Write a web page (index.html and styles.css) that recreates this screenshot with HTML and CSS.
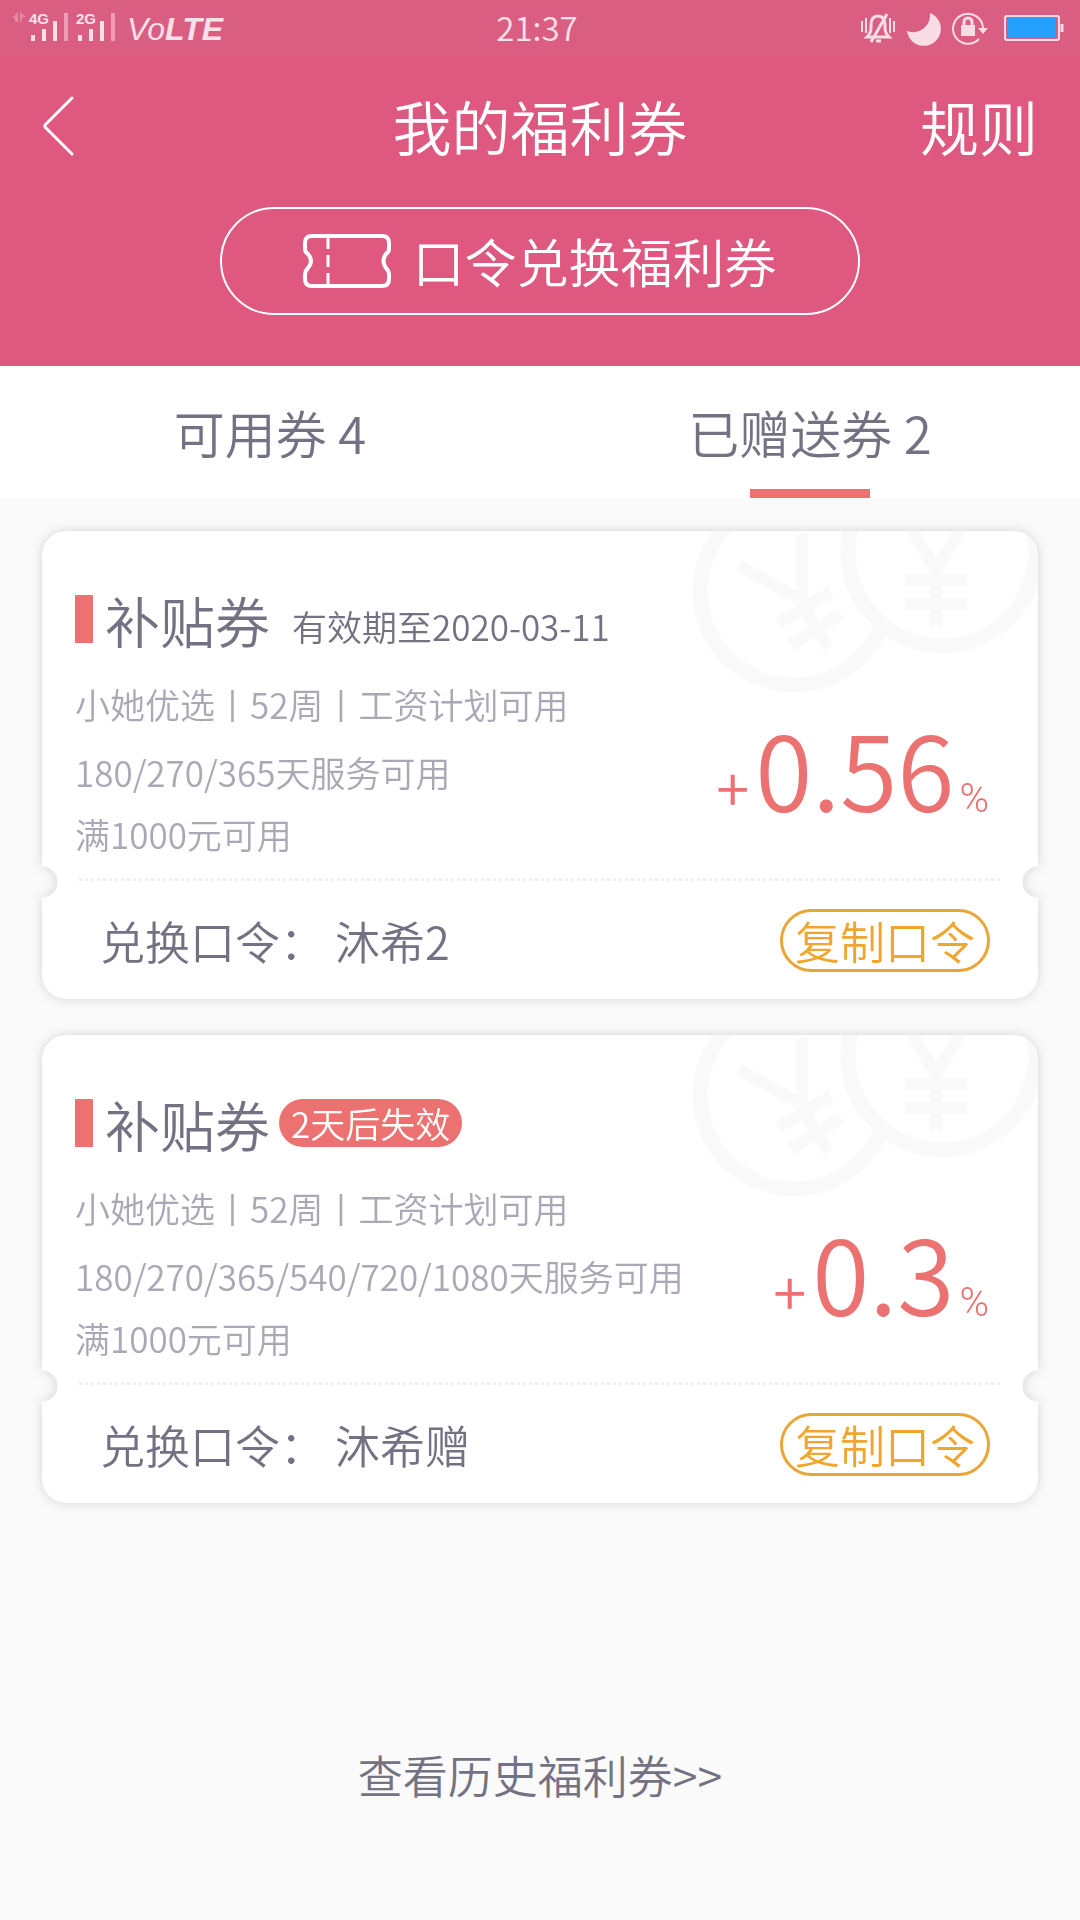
FILE: index.html
```html
<!DOCTYPE html>
<html lang="zh-CN">
<head>
<meta charset="UTF-8">
<meta name="viewport" content="width=device-width, initial-scale=1">
<title>我的福利券</title>
<link rel="stylesheet" href="styles.css">
</head>
<body>
<div class="status">
  <div class="status-left">
    <svg class="signal" width="108" height="34" viewBox="10 10 108 34" aria-hidden="true">
      <g fill="#e58aa6">
        <path d="M12 18l6-6v10h-3v-4zM20 12l6 5h-3l-3 6z"/>
      </g>
      <g fill="#ee9db6">
        <rect x="64" y="13" width="4" height="28"/><rect x="111" y="13" width="4" height="28"/>
      </g>
      <g fill="#fae0e8">
        <rect x="31" y="35" width="4" height="6"/><rect x="42" y="29" width="4" height="12"/><rect x="53" y="21" width="4" height="20"/>
        <rect x="78" y="35" width="4" height="6"/><rect x="89" y="29" width="4" height="12"/><rect x="100" y="21" width="4" height="20"/>
        <text class="net" x="29" y="24">4G</text><text class="net" x="76" y="24">2G</text>
      </g>
    </svg>
    <span class="volte">Vo<b>LTE</b></span>
  </div>
  <time class="clock">21:37</time>
  <svg class="status-icons" width="206" height="40" viewBox="858 6 206 40" fill="none" stroke="#f8dde6" aria-hidden="true">
    <path stroke-width="2" d="M862 20v11M866 17v15M890 17v15M894 20v11"/>
    <path stroke-width="3" d="M867 36q4-4 4-9v-3q0-9 7-9t7 9v3q0 5 4 9zM871 41l16-28M876 40h5"/>
    <path fill="#f8dde6" stroke="none" d="M930 12a17 17 0 1 1-23 18a17 17 0 0 0 23-18z"/>
    <path stroke-width="2" d="M979 38a15 15 0 1 1 4-11"/>
    <path fill="#f8dde6" stroke="none" d="M978 27h10l-5 6zM961 24h14v11h-14z"/>
    <path stroke-width="3" d="M964 25v-4a4 4 0 0 1 8 0v4"/>
    <rect x="1005" y="15" width="54" height="24" rx="2" stroke-width="2"/>
    <rect x="1007" y="17" width="49" height="20" fill="#26a0ff" stroke="none"/>
    <path stroke-width="3" d="M1062 23v8"/>
  </svg>
</div>
<header class="hero">
  <nav class="navbar">
    <button class="back" type="button" aria-label="返回">
      <svg width="34" height="62" viewBox="1 0 34 62" fill="none" stroke="#fff" stroke-width="3" stroke-linecap="round" stroke-linejoin="round"><path d="M31 3L4 30a2 2 0 0 0 0 2L31 59"/></svg>
    </button>
    <h1 class="title">我的福利券</h1>
    <a class="rules" href="#rules">规则</a>
  </nav>
  <button class="redeem" type="button">
    <svg width="88" height="54" viewBox="0 0 88 54" fill="none" stroke="#fff" stroke-width="4" aria-hidden="true">
      <path d="M9 2h70q7 0 7 7v6q0 3-3 5q-5 7 0 14q3 3 3 6v5q0 7-7 7H9q-7 0-7-7v-5q0-3 3-6q6-7 0-14q-3-2-3-5V9q0-7 7-7z"/>
      <path stroke-width="3" d="M25 4v11M25 21v12M25 39v11"/>
    </svg>
    <span>口令兑换福利券</span>
  </button>
</header>
<nav class="tabs">
  <a class="tab" href="#available">可用券 4</a>
  <a class="tab active" href="#given" aria-current="page">已赠送券 2</a>
</nav>
<main class="content">
  <article class="coupon">
    <div class="card">
      <svg class="coins" width="360" height="180" viewBox="640 0 360 180" fill="none" stroke="#f9f9f9" aria-hidden="true">
        <circle cx="752" cy="60" r="94" stroke-width="15"/>
        <path stroke-width="12" d="M697 35l63 34V3M757 66l29 51M736 92l53-31M748 114l51-31"/>
        <circle cx="900" cy="21" r="94" stroke-width="15" fill="#fff"/>
        <path stroke-width="12" d="M868-6l26 46l26-46M894 38v58M863 49h62M863 73h62"/>
      </svg>
      <div class="card-head">
        <h2 class="name">补贴券</h2>
        <span class="expiry">有效期至2020-03-11</span>
      </div>
      <div class="card-body">
        <ul class="terms"><li>小她优选丨52周丨工资计划可用</li><li>180/270/365天服务可用</li><li>满1000元可用</li></ul>
        <p class="rate"><span class="plus">+</span>0.56<span class="percent">%</span></p>
      </div>
      <div class="card-foot">
        <span>兑换口令： 沐希2</span>
        <button class="copy" type="button">复制口令</button>
      </div>
    </div>
  </article>
  <article class="coupon">
    <div class="card">
      <svg class="coins" width="360" height="180" viewBox="640 0 360 180" fill="none" stroke="#f9f9f9" aria-hidden="true">
        <circle cx="752" cy="60" r="94" stroke-width="15"/>
        <path stroke-width="12" d="M697 35l63 34V3M757 66l29 51M736 92l53-31M748 114l51-31"/>
        <circle cx="900" cy="21" r="94" stroke-width="15" fill="#fff"/>
        <path stroke-width="12" d="M868-6l26 46l26-46M894 38v58M863 49h62M863 73h62"/>
      </svg>
      <div class="card-head">
        <h2 class="name">补贴券</h2>
        <span class="badge">2天后失效</span>
      </div>
      <div class="card-body">
        <ul class="terms"><li>小她优选丨52周丨工资计划可用</li><li>180/270/365/540/720/1080天服务可用</li><li>满1000元可用</li></ul>
        <p class="rate"><span class="plus">+</span>0.3<span class="percent">%</span></p>
      </div>
      <div class="card-foot">
        <span>兑换口令： 沐希赠</span>
        <button class="copy" type="button">复制口令</button>
      </div>
    </div>
  </article>
  <a class="history" href="#history">查看历史福利券&gt;&gt;</a>
</main>
</body>
</html>
```
FILE: styles.css
```css
* { box-sizing: border-box; margin: 0; padding: 0; }
body {
  min-height: 100vh;
  background: #fafafa;
  color: #747282;
  font-family: "Noto Sans CJK SC", sans-serif;
  font-weight: 350;
}
a { color: inherit; text-decoration: none; }
button { background: none; border: 0; color: inherit; font: inherit; cursor: pointer; }
svg { display: block; flex: none; }

.status {
  position: relative;
  z-index: 1;
  display: grid;
  grid-template-columns: 1fr auto 1fr;
  align-items: center;
  height: 54px;
  padding: 0 16px 0 10px;
  background: #da5e82;
  color: #fae0e8;
}
.status-left { display: flex; align-items: center; gap: 9px; }
.net { font: bold 15px "Liberation Sans", sans-serif; }
.volte { font: italic 32px/40px "Liberation Sans", sans-serif; padding-top: 4px; }
.clock { font-size: 33px; line-height: 40px; }
.status-icons { justify-self: end; }

.hero {
  display: flex;
  flex-direction: column;
  align-items: center;
  gap: 9px;
  padding-bottom: 51px;
  background: #df5880;
  color: #fff;
}
.navbar {
  display: grid;
  grid-template-columns: 1fr auto 1fr;
  align-items: center;
  width: 100%;
  height: 144px;
  padding: 0 42px;
}
.back { justify-self: start; }
.title { font-size: 59px; font-weight: inherit; line-height: 72px; }
.rules { justify-self: end; font-size: 59px; line-height: 72px; }
.redeem {
  display: flex;
  align-items: center;
  justify-content: center;
  gap: 21px;
  width: 640px;
  max-width: 92%;
  height: 108px;
  border: 2px solid #fff;
  border-radius: 54px;
  font-size: 52px;
  line-height: 72px;
}

.tabs { display: flex; height: 132px; background: #fff; }
.tab {
  flex: 1;
  display: flex;
  justify-content: center;
  align-items: center;
  position: relative;
  font-size: 51px;
}
.active::after {
  content: "";
  position: absolute;
  bottom: 0;
  width: 120px;
  height: 9px;
  background: #eb7270;
}

.content { display: flex; flex-direction: column; gap: 36px; padding: 33px 42px; }
.coupon { filter: drop-shadow(0 0 6px rgba(0, 0, 0, .15)); }
.card {
  position: relative;
  overflow: hidden;
  border-radius: 24px;
  background: #fff;
  mask:
    radial-gradient(circle at 0 calc(100% - 117px), transparent 15px, #000 16px) intersect,
    radial-gradient(circle at 100% calc(100% - 117px), transparent 15px, #000 16px);
}
.coins { position: absolute; top: 0; right: -4px; }
.card-head {
  position: relative;
  display: flex;
  align-items: center;
  height: 116px;
  padding: 60px 33px 0;
}
.card-head::before { content: ""; width: 18px; height: 48px; margin-right: 12px; background: #eb7270; }
.name { font-size: 55px; font-weight: inherit; line-height: 56px; }
.expiry { margin-left: 22px; padding-top: 14px; font-size: 35px; line-height: 42px; }
.badge {
  margin-left: 9px;
  padding: 0 12px;
  border-radius: 24px;
  background: #eb7270;
  color: #fff;
  font-size: 35px;
  line-height: 48px;
}
.card-body {
  position: relative;
  display: flex;
  justify-content: space-between;
  padding: 26px 49px 13px 33px;
}
.terms { list-style: none; color: #aaa8b5; font-size: 35px; line-height: 62px; }
.terms li:first-child { margin-bottom: 6px; }
.rate { padding-top: 34px; color: #eb7270; font-size: 104px; line-height: 120px; white-space: nowrap; }
.plus { font-size: 60px; line-height: 60px; margin-right: 6px; }
.percent { margin-left: 5px; font-family: Roboto, sans-serif; font-size: 40px; line-height: 40px; }
.card-foot {
  display: flex;
  justify-content: space-between;
  align-items: center;
  height: 121px;
  padding: 4px 48px 0 58px;
  background: repeating-linear-gradient(90deg, #eee 0 3px, transparent 3px 6px) 37px 0 / calc(100% - 74px) 3px no-repeat;
  font-size: 45px;
}
.copy {
  height: 63px;
  padding: 0 12px;
  border: 3px solid #e9a536;
  border-radius: 32px;
  color: #f0a52c;
  line-height: 57px;
}
.history { align-self: center; margin-top: 203px; font-size: 45px; line-height: 66px; }
```
